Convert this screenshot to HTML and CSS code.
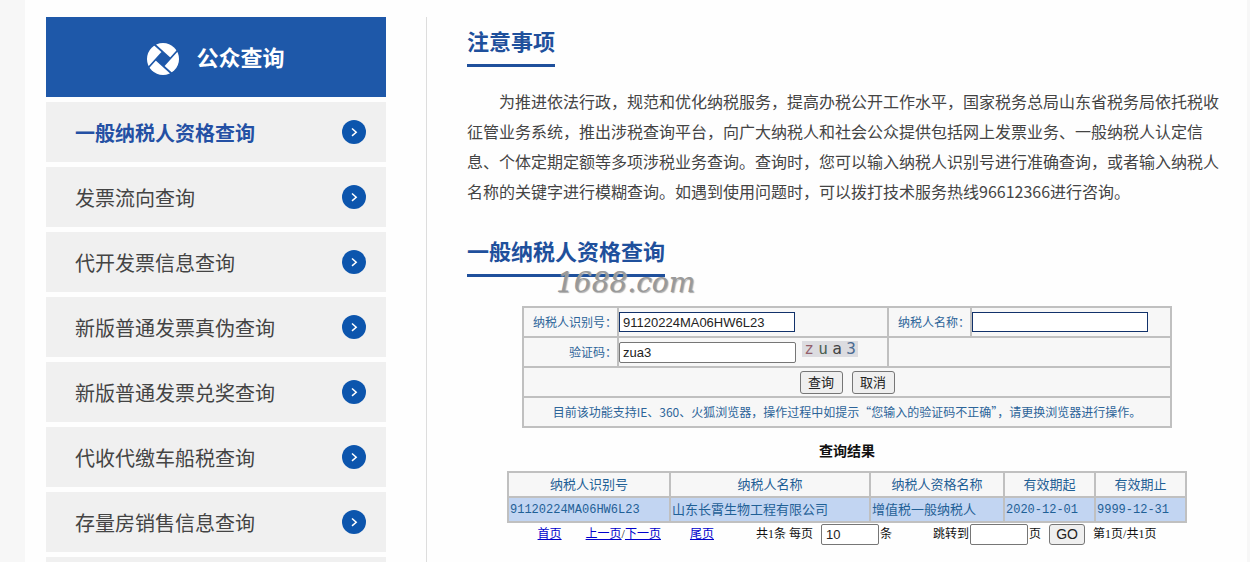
FILE: index.html
```html
<!DOCTYPE html>
<html lang="zh-CN">
<head>
<meta charset="utf-8">
<title>公众查询</title>
<link rel="stylesheet" href="styles.css">
</head>
<body>
<svg class="defs" aria-hidden="true">
  <symbol id="arrow" viewBox="0 0 24 24">
    <circle cx="12" cy="12" r="12" fill="#0c55ad"/>
    <path d="M10 8.5l4.2 3.7-4.2 3.7" fill="none" stroke="#fff" stroke-width="1.5"/>
  </symbol>
</svg>
<div class="wrapper">
  <nav class="sidebar">
    <h2 class="side-title">
      <svg class="logo" viewBox="0 0 32 32" aria-hidden="true">
        <circle cx="16" cy="16" r="16" fill="#fff"/>
        <path d="M15.5 9l7.5 6.5-6.500 7.500-7.500-6.500z" fill="#1e58a9"/>
        <path d="M7.500 1.500L23 15.500M30.500 7.500L16.500 23M24.500 30.500L9 16.500M1.500 24.500L15.500 9" stroke="#1e58a9" stroke-width="1.800" fill="none"/>
      </svg>
      <span>公众查询</span>
    </h2>
    <ul class="menu">
      <li><a class="item active" href="#">一般纳税人资格查询<svg class="arrow"><use href="#arrow"/></svg></a></li>
      <li><a class="item" href="#">发票流向查询<svg class="arrow"><use href="#arrow"/></svg></a></li>
      <li><a class="item" href="#">代开发票信息查询<svg class="arrow"><use href="#arrow"/></svg></a></li>
      <li><a class="item" href="#">新版普通发票真伪查询<svg class="arrow"><use href="#arrow"/></svg></a></li>
      <li><a class="item" href="#">新版普通发票兑奖查询<svg class="arrow"><use href="#arrow"/></svg></a></li>
      <li><a class="item" href="#">代收代缴车船税查询<svg class="arrow"><use href="#arrow"/></svg></a></li>
      <li><a class="item" href="#">存量房销售信息查询<svg class="arrow"><use href="#arrow"/></svg></a></li>
      <li><a class="item" href="#"></a></li>
    </ul>
  </nav>
  <main class="content">
    <h2 class="title">注意事项</h2>
    <p class="notice">为推进依法行政，规范和优化纳税服务，提高办税公开工作水平，国家税务总局山东省税务局依托税收征管业务系统，推出涉税查询平台，向广大纳税人和社会公众提供包括网上发票业务、一般纳税人认定信息、个体定期定额等多项涉税业务查询。查询时，您可以输入纳税人识别号进行准确查询，或者输入纳税人名称的关键字进行模糊查询。如遇到使用问题时，可以拨打技术服务热线96612366进行咨询。</p>
    <div class="title-row">
      <h2 class="title">一般纳税人资格查询</h2>
      <span class="watermark">1688.com</span>
    </div>
    <form>
      <table class="query">
        <colgroup><col class="q1"><col class="q2"><col class="q3"><col class="q4"></colgroup>
        <tr>
          <td class="label"><label for="nsrsbh">纳税人识别号：</label></td>
          <td><input class="field strong" id="nsrsbh" type="text" value="91120224MA06HW6L23"></td>
          <td class="label"><label for="nsrmc">纳税人名称：</label></td>
          <td><input class="field strong" id="nsrmc" type="text"></td>
        </tr>
        <tr>
          <td class="label"><label for="yzm">验证码：</label></td>
          <td><div class="code-cell"><input class="field" id="yzm" type="text" value="zua3"><span class="captcha"><i class="c1">z</i><i class="c2">u</i><i class="c3">a</i><i class="c4">3</i></span></div></td>
          <td colspan="2"></td>
        </tr>
        <tr>
          <td colspan="4"><div class="actions"><button class="btn" type="button">查询</button><button class="btn" type="reset">取消</button></div></td>
        </tr>
        <tr>
          <td colspan="4" class="tip">目前该功能支持IE、360、火狐浏览器，操作过程中如提示“您输入的验证码不正确”，请更换浏览器进行操作。</td>
        </tr>
      </table>
    </form>
    <h3 class="result-title">查询结果</h3>
    <table class="result">
      <colgroup><col class="r1"><col class="r2"><col class="r3"><col class="r4"><col class="r5"></colgroup>
      <thead>
        <tr><th>纳税人识别号</th><th>纳税人名称</th><th>纳税人资格名称</th><th>有效期起</th><th>有效期止</th></tr>
      </thead>
      <tbody>
        <tr><td class="code">91120224MA06HW6L23</td><td>山东长霄生物工程有限公司</td><td>增值税一般纳税人</td><td class="code">2020-12-01</td><td class="code">9999-12-31</td></tr>
      </tbody>
    </table>
    <div class="pager">
      <a href="#">首页</a>
      <span><a href="#">上一页</a>/<a href="#">下一页</a></span>
      <a class="last" href="#">尾页</a>
      <span class="size">共1条 <label for="size">每页</label><input class="num" id="size" type="text" value="10">条</span>
      <span class="jump"><label for="page">跳转到</label><input class="num" id="page" type="text">页<button class="go" type="button">GO</button>第1页/共1页</span>
    </div>
  </main>
</div>
</body>
</html>
```
FILE: styles.css
```css
* { box-sizing: border-box; }
body {
  margin: 0;
  height: 100vh;
  overflow: hidden;
  background: #f7f7f7;
  font-family: "Noto Sans CJK SC", sans-serif;
  color: #444;
}
h2, h3, p, ul { margin: 0; padding: 0; }
.defs { display: none; }
.wrapper {
  display: flex;
  gap: 40px;
  height: 100vh;
  overflow: hidden;
  margin: 0 3px 0 25px;
  padding: 17px 20px 0 21px;
  background: #fefefe;
}

.sidebar { flex: none; width: 340px; }
.side-title {
  display: flex;
  align-items: center;
  justify-content: center;
  gap: 17px;
  height: 80px;
  background: #1e58a9;
  color: #fff;
  font-size: 22px;
  line-height: 32px;
}
.side-title span { padding-bottom: 3px; }
.logo { width: 32px; height: 32px; margin-top: 4px; }
.menu { list-style: none; }
.item {
  display: flex;
  align-items: center;
  justify-content: space-between;
  height: 60px;
  margin-top: 5px;
  padding: 0 20px 0 29px;
  background: #f0f0f0;
  color: #444;
  font-size: 20px;
  text-decoration: none;
}
.item.active { color: #2450a4; font-weight: bold; }
.arrow { width: 24px; height: 24px; }

.content {
  flex: 1;
  min-width: 0;
  padding: 10px 0 0 40px;
  border-left: 1px solid #ddd;
}
.title {
  width: fit-content;
  padding-bottom: 11px;
  border-bottom: 3px solid #1f509c;
  color: #1f509c;
  font-size: 22px;
  line-height: 26px;
}
.notice {
  margin: 19px 0 31px;
  font-size: 16px;
  line-height: 30px;
  text-indent: 2em;
}
.title-row { position: relative; }
.watermark {
  position: absolute;
  left: 89px;
  top: 30px;
  color: #999;
  font: italic 28px/32px "DejaVu Serif", serif;
  text-shadow: 1px 1px 1px #aaa;
}

table { border-collapse: collapse; table-layout: fixed; }
td, th { border: 2px solid #c0c0c0; }
.query {
  width: 650px;
  margin: 29px auto 0;
  background: #f7f7f7;
  color: #2c6499;
  font-size: 12px;
}
.query td { height: 30px; padding: 0; line-height: 18px; }
.query .label { text-align: right; }
.query .tip { text-align: center; }
.q1 { width: 95px; }
.q2 { width: 270px; }
.q3 { width: 83px; }
.q4 { width: 200px; }
.field {
  display: block;
  width: 177px;
  height: 21px;
  padding: 0 3px;
  border: 1px solid #767676;
  border-radius: 2px;
  background: #fff;
  color: #222;
  font: 13px "Liberation Sans", sans-serif;
}
.field.strong { width: 176px; height: 20px; border-color: #12326b; border-radius: 0; }
.code-cell { display: flex; align-items: center; gap: 6px; }
.captcha {
  display: flex;
  justify-content: space-around;
  width: 56px;
  height: 16px;
  margin-bottom: 6px;
  background: #dcdce0;
  font: 16px/16px "DejaVu Sans Mono", monospace;
}
.captcha i { font-style: normal; }
.c1 { color: #94606c; }
.c2 { color: #4c6152; }
.c3 { color: #444; }
.c4 { color: #4b6b91; }
.actions { display: flex; justify-content: center; gap: 9px; }
.btn, .go {
  padding: 0;
  border: 1px solid #767676;
  border-radius: 3px;
  background: #efefef;
  color: #222;
}
.btn { width: 43px; height: 23px; font: 13px/18px "Noto Sans CJK SC", sans-serif; }

.result-title {
  margin: 12px 0 11px;
  color: #111;
  font-size: 14px;
  line-height: 20px;
  text-align: center;
}
.result {
  width: 680px;
  margin: 0 auto;
  background: #f7f7f7;
  color: #1f6096;
  font-size: 13px;
}
.result th, .result td { height: 25px; padding: 0 1px 2px; font-weight: normal; line-height: 20px; }
.result td { background: #c2d5f2; text-align: left; }
.result .code { padding-bottom: 0; font-family: "Liberation Mono", monospace; font-size: 12px; }
.r1 { width: 162px; }
.r2 { width: 200px; }
.r3 { width: 134px; }
.r4 { width: 91px; }
.r5 { width: 91px; }

.pager {
  display: flex;
  align-items: center;
  justify-content: center;
  gap: 24px;
  height: 22px;
  color: #111;
  font: 12px/20px "Liberation Serif", "Noto Sans CJK SC", serif;
}
.pager a { color: #00c; }
.last { margin: 0 18px 0 5px; }
.size, .jump { display: flex; align-items: center; white-space: pre; }
.jump { margin-left: 17px; }
.num {
  width: 58px;
  height: 21px;
  margin: 0 1px;
  padding: 0 4px;
  border: 1px solid #767676;
  border-radius: 2px;
  color: #222;
  font: 13px "Liberation Sans", sans-serif;
}
.size .num { margin-left: 8px; }
.go { width: 36px; height: 21px; margin: 0 8px; font: 14px "Liberation Sans", sans-serif; }
```
